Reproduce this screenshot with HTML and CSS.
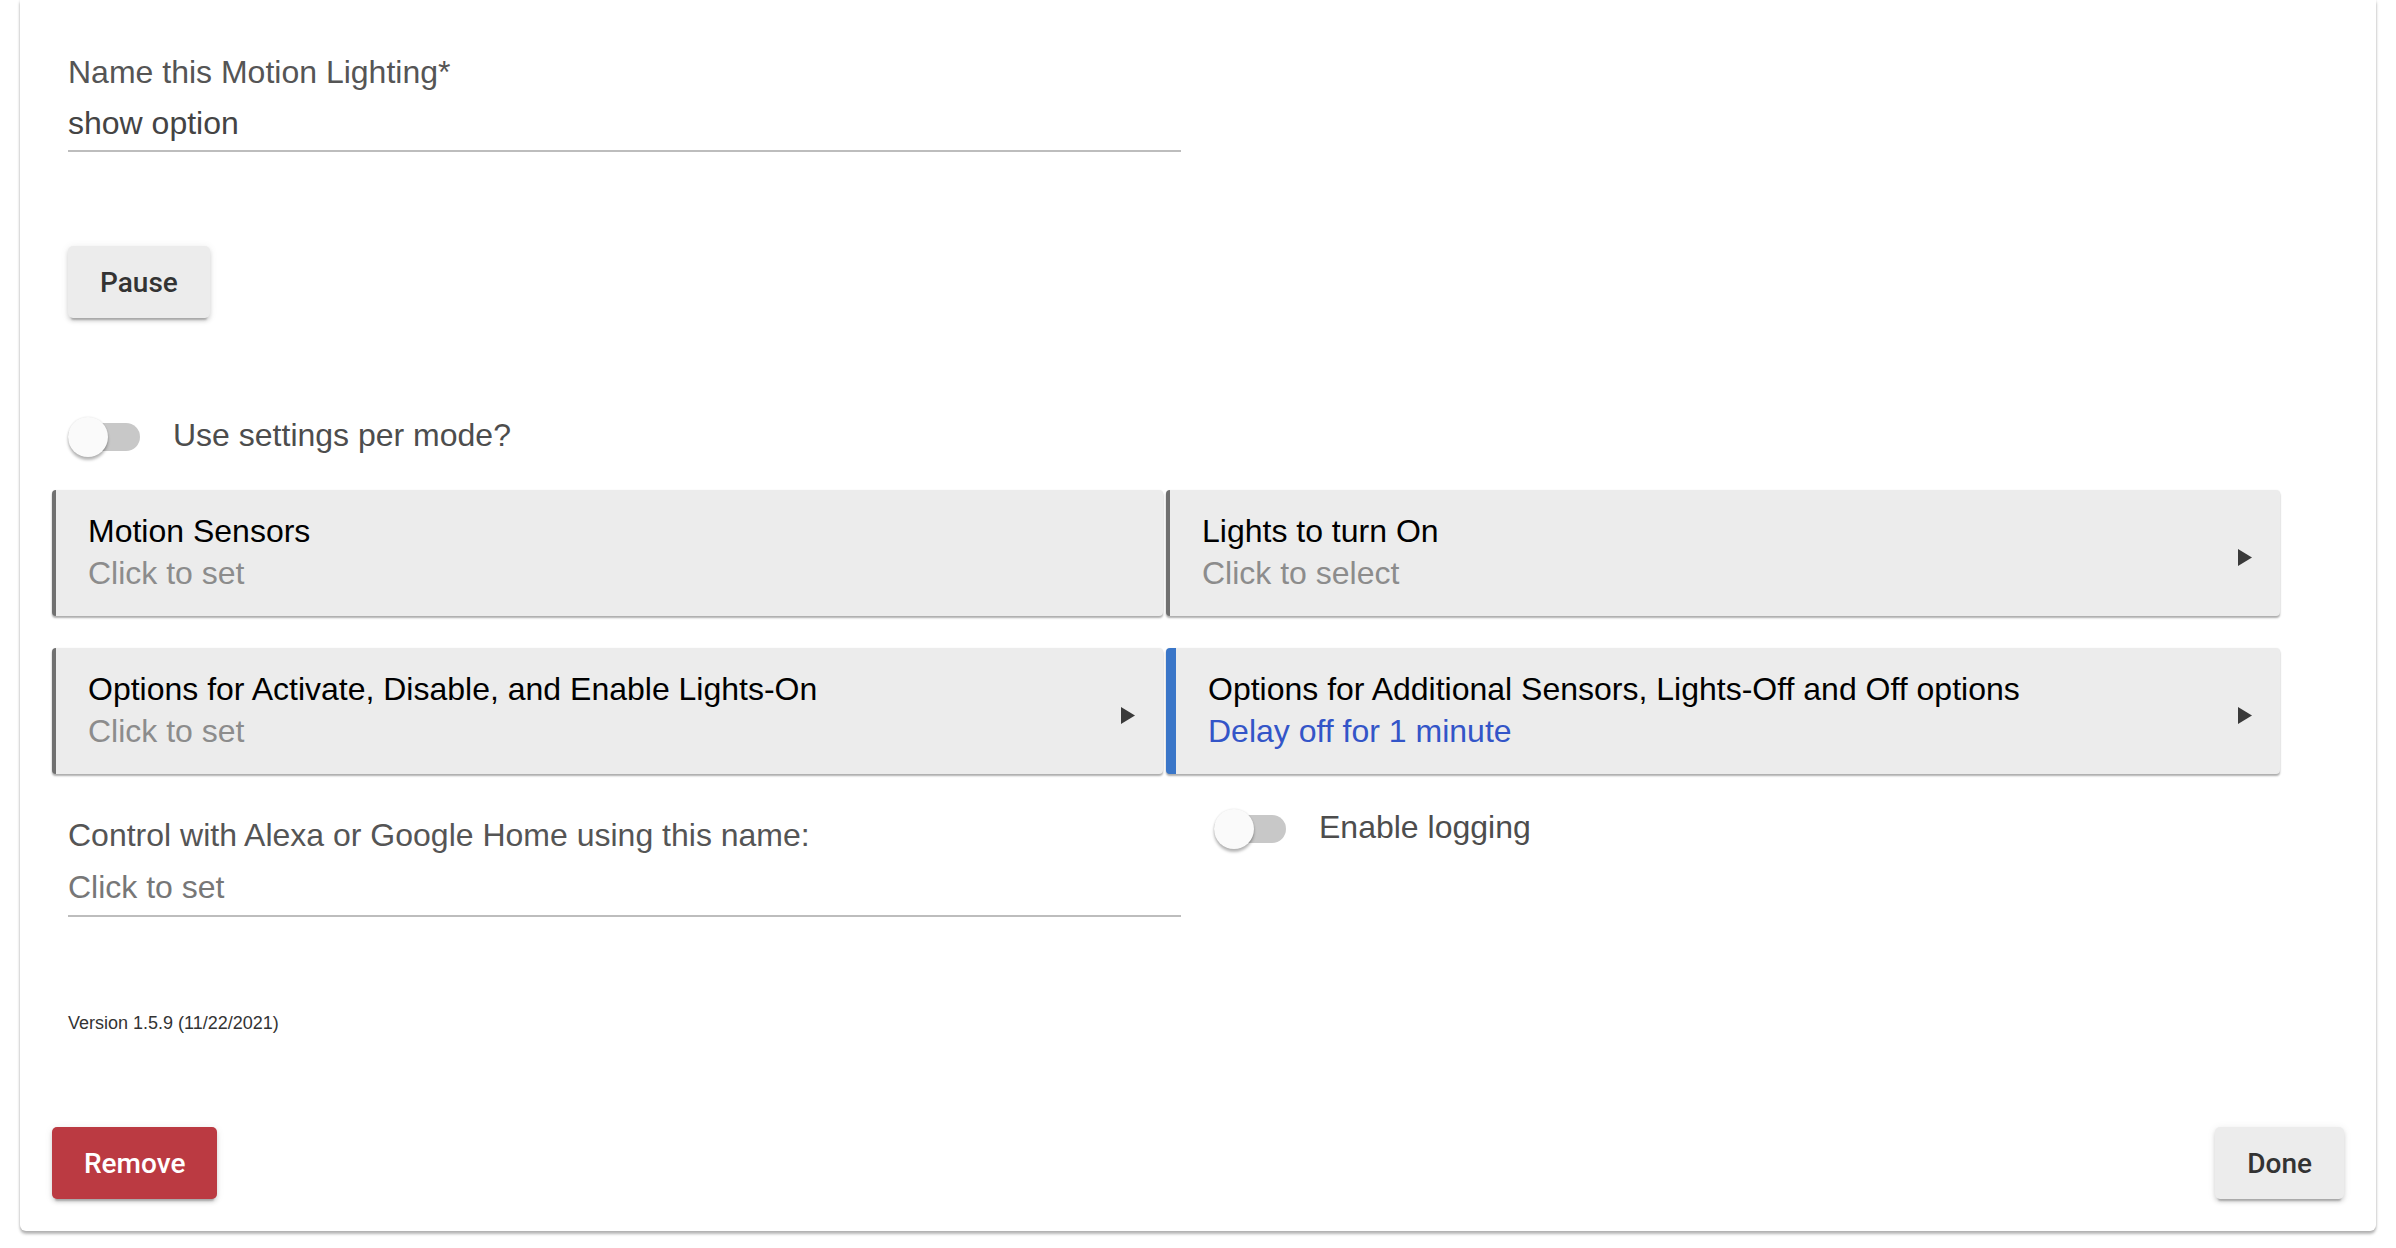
FILE: index.html
```html
<!DOCTYPE html>
<html lang="en">
<head>
<meta charset="utf-8">
<title>Motion Lighting</title>
<link rel="stylesheet" href="styles.css">
</head>
<body>
<div class="panel">
  <div class="field name-field">
    <div class="field-label">Name this Motion Lighting*</div>
    <div class="field-value">show option</div>
  </div>

  <div class="pause-row"><button class="btn btn-light">Pause</button></div>

  <div class="switch-row mode-row">
    <span class="switch"><span class="track"></span><span class="knob"></span></span>
    <span class="switch-label">Use settings per mode?</span>
  </div>

  <div class="cards">
    <div class="card">
      <div class="card-text">
        <div class="card-title">Motion Sensors</div>
        <div class="card-sub">Click to set</div>
      </div>
    </div>
    <div class="card">
      <div class="card-text">
        <div class="card-title">Lights to turn On</div>
        <div class="card-sub">Click to select</div>
      </div>
      <svg class="arrow" width="14" height="17" viewBox="0 0 14 17"><polygon points="0,0 14,8.5 0,17" fill="#3a3a3a"/></svg>
    </div>
    <div class="card">
      <div class="card-text">
        <div class="card-title">Options for Activate, Disable, and Enable Lights-On</div>
        <div class="card-sub">Click to set</div>
      </div>
      <svg class="arrow" width="14" height="17" viewBox="0 0 14 17"><polygon points="0,0 14,8.5 0,17" fill="#3a3a3a"/></svg>
    </div>
    <div class="card card-active">
      <div class="card-text">
        <div class="card-title">Options for Additional Sensors, Lights-Off and Off options</div>
        <div class="card-sub card-sub-blue">Delay off for 1 minute</div>
      </div>
      <svg class="arrow" width="14" height="17" viewBox="0 0 14 17"><polygon points="0,0 14,8.5 0,17" fill="#3a3a3a"/></svg>
    </div>
  </div>

  <div class="row3">
    <div class="row3-left">
      <div class="field control-field">
        <div class="field-label">Control with Alexa or Google Home using this name:</div>
        <div class="field-value placeholder">Click to set</div>
      </div>
    </div>
    <div class="switch-row logging-row">
      <span class="switch"><span class="track"></span><span class="knob"></span></span>
      <span class="switch-label">Enable logging</span>
    </div>
  </div>

  <div class="version">Version 1.5.9 (11/22/2021)</div>

  <div class="actions">
    <button class="btn btn-danger">Remove</button>
    <button class="btn btn-light">Done</button>
  </div>
</div>
</body>
</html>
```

FILE: styles.css
```css
html, body {
  margin: 0;
  padding: 0;
  background: #ffffff;
}
body {
  width: 2396px;
  height: 1248px;
  overflow: hidden;
  font-family: "Liberation Sans", Arial, Helvetica, sans-serif;
  color: #000;
}

.panel {
  margin: 0 20px;
  padding: 52px 32px 32px 32px;
  background: #ffffff;
  border-radius: 0 0 6px 6px;
  box-shadow: 0 3px 3px rgba(0, 0, 0, 0.28), 0 0 3px rgba(0, 0, 0, 0.12);
}

/* text fields */
.field {
  margin-left: 16px;
  width: 1113px;
  font-size: 32px;
}
.field-label {
  line-height: 40px;
  color: #555555;
}
.field-value {
  line-height: 40px;
  margin-top: 11px;
  padding-bottom: 7px;
  border-bottom: 2px solid #bdbdbd;
  color: #444444;
}
.field-value.placeholder {
  margin-top: 12px;
  padding-bottom: 8px;
  color: #777777;
}

/* buttons */
.btn {
  font-family: Roboto, "Liberation Sans", Arial, sans-serif;
  font-weight: 500;
  font-size: 28px;
  height: 72px;
  line-height: 73px;
  padding: 0 32px;
  border: none;
  border-radius: 5px;
  cursor: pointer;
  box-shadow: 0 5px 2px -3px rgba(0, 0, 0, 0.22), 0 3px 4px 0 rgba(0, 0, 0, 0.14), 0 1px 8px 0 rgba(0, 0, 0, 0.08);
}
.btn-light {
  background: #ececec;
  color: #333333;
}
.btn-danger {
  background: #bb3a42;
  color: #ffffff;
}
.pause-row {
  margin-top: 94px;
  margin-left: 16px;
}

/* switches */
.switch-row {
  display: flex;
  align-items: center;
  height: 40px;
}
.mode-row {
  margin-top: 99px;
  margin-left: 16px;
}
.switch {
  position: relative;
  display: block;
  width: 72px;
  height: 40px;
  flex: none;
}
.track {
  position: absolute;
  left: 0;
  top: 6px;
  width: 72px;
  height: 28px;
  border-radius: 14px;
  background: #c8c8c8;
}
.knob {
  position: absolute;
  left: 0;
  top: 0;
  width: 40px;
  height: 40px;
  border-radius: 50%;
  background: #fafafa;
  box-shadow: 0 3px 3px rgba(0, 0, 0, 0.28), 0 0 2px rgba(0, 0, 0, 0.12);
}
.switch-label {
  margin-left: 33px;
  margin-bottom: 4px;
  font-size: 32px;
  line-height: 40px;
  color: #4d4d4d;
}

/* cards */
.cards {
  margin-top: 33px;
  display: grid;
  grid-template-columns: 1111px 1114px;
  column-gap: 3px;
  row-gap: 32px;
}
.card {
  display: flex;
  align-items: center;
  box-sizing: border-box;
  height: 126px;
  padding: 20px 28px 22px 32px;
  background: #ececec;
  border-left: 4px solid #707070;
  border-radius: 4px;
  box-shadow: 0 2px 2px rgba(0, 0, 0, 0.32), 0 0 2px rgba(0, 0, 0, 0.06);
}
.card-active {
  border-left: 10px solid #3a76c8;
}
.card-text {
  flex: 1;
  font-size: 32px;
  line-height: 42px;
}
.card-title {
  color: #000000;
}
.card-sub {
  color: #8c8c8c;
}
.card-sub-blue {
  color: #3355c8;
}
.arrow {
  flex: none;
  margin-top: 11px;
}

/* bottom section */
.row3 {
  margin-top: 35px;
  display: grid;
  grid-template-columns: 1114px 1fr;
  align-items: start;
}
.row3-left {
  padding-top: 6px;
}
.logging-row {
  margin-left: 48px;
}
.version {
  margin-top: 94px;
  margin-left: 16px;
  font-size: 18px;
  line-height: 24px;
  color: #333333;
}
.actions {
  margin-top: 92px;
  display: flex;
  justify-content: space-between;
}
```
